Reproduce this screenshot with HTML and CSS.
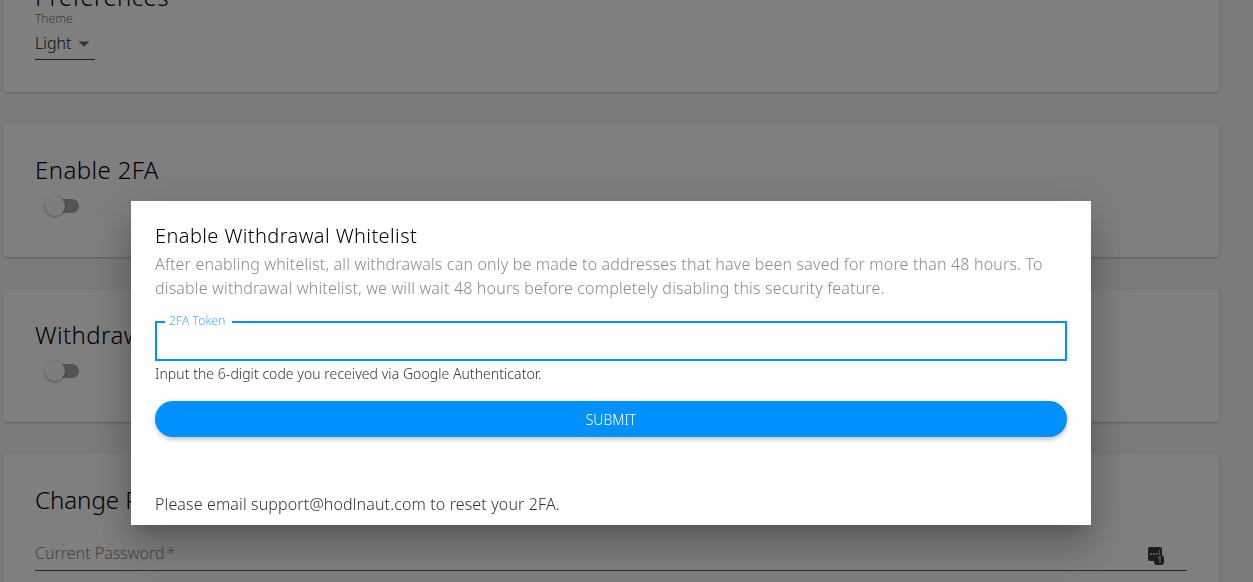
FILE: index.html
```html
<!DOCTYPE html>
<html lang="en">
<head>
<meta charset="utf-8">
<title>Settings</title>
<link rel="stylesheet" href="styles.css">
</head>
<body>
<main class="page">
  <section class="card card-prefs">
    <h2 class="card-title">Preferences</h2>
    <div class="select-label">Theme</div>
    <div class="select"><span>Light</span><svg class="caret" width="12" height="6" viewBox="0 0 12 6"><path d="M0.5 0.5h11L6 5.8z"/></svg></div>
  </section>
  <section class="card">
    <h2 class="card-title">Enable 2FA</h2>
    <div class="switch"><span class="track"></span><span class="thumb"></span></div>
  </section>
  <section class="card">
    <h2 class="card-title">Withdrawal Whitelist</h2>
    <div class="switch"><span class="track"></span><span class="thumb"></span></div>
  </section>
  <section class="card card-last">
    <h2 class="card-title card-title-tight">Change Password</h2>
    <div class="field">
      <span>Current Password<span class="req">*</span></span>
      <svg class="pm-icon" width="17" height="19" viewBox="0 0 17 19">
        <rect x="0" y="0" width="14" height="14" rx="2" fill="#3b3b3b"/>
        <rect x="2" y="6" width="2" height="2" fill="#aaa"/><rect x="5" y="6" width="2" height="2" fill="#aaa"/><rect x="8" y="6" width="2" height="2" fill="#aaa"/><rect x="11" y="3" width="1" height="5" fill="#aaa"/>
        <rect x="6" y="8" width="10" height="10" rx="3" fill="#3b3b3b"/>
        <path d="M10 11l2-1v6" fill="none" stroke="#aaa" stroke-width="1.6"/>
      </svg>
    </div>
  </section>
</main>
<div class="overlay">
  <div class="modal">
    <h3 class="modal-title">Enable Withdrawal Whitelist</h3>
    <p class="modal-desc">After enabling whitelist, all withdrawals can only be made to addresses that have been saved for more than 48 hours. To disable withdrawal whitelist, we will wait 48 hours before completely disabling this security feature.</p>
    <fieldset class="token">
      <legend>2FA Token</legend>
    </fieldset>
    <p class="helper">Input the 6-digit code you received via Google Authenticator.</p>
    <button class="submit" type="button">SUBMIT</button>
    <p class="reset">Please email support@hodlnaut.com to reset your 2FA.</p>
  </div>
</div>
</body>
</html>
```
FILE: styles.css
```css
* { box-sizing: border-box; }
html, body { margin: 0; height: 100%; overflow: hidden; }
body {
  background: #f6f6f6;
  font-family: "Noto Sans", "Open Sans", sans-serif;
  font-weight: 300;
  color: #000;
}
.page {
  width: 1216px;
  margin: -32px 0 0 3px;
  display: flex;
  flex-direction: column;
  gap: 32px;
}
.card {
  background: #fff;
  border-radius: 4px;
  height: 133px;
  flex: none;
  padding: 31px 32px 0;
  box-shadow: 0 1px 3px rgba(0,0,0,.16), 0 1px 1px rgba(0,0,0,.08);
}
.card-prefs { height: 124px; padding-top: 14px; }
.card-last { height: 128px; border-radius: 4px 4px 0 0; }
.card-title {
  margin: 0;
  font-size: 24px;
  line-height: 30px;
  font-weight: 300;
  letter-spacing: 0.4px;
  white-space: nowrap;
}
.card-title-tight { letter-spacing: 0; }
.select-label { font-size: 12px; line-height: 14px; color: #777; }
.select {
  width: 60px;
  height: 33px;
  margin-top: 1px;
  border-bottom: 1px solid #444;
  display: flex;
  align-items: center;
  gap: 6px;
  font-size: 16px;
  color: #222;
}
.caret { fill: #666; margin-top: 2px; }
.switch { position: relative; width: 38px; height: 24px; margin: 11px 0 0 8px; }
.track { position: absolute; left: 4px; top: 3px; width: 32px; height: 14px; border-radius: 7px; background: #a8a8a8; }
.thumb { position: absolute; left: 2px; top: 0; width: 20px; height: 20px; border-radius: 50%; background: #fafafa; box-shadow: 0 1px 3px rgba(0,0,0,.35); }
.field {
  position: relative;
  margin-top: 16px;
  padding-top: 4px;
  height: 40px;
  width: 1152px;
  border-bottom: 1px solid #555;
  display: flex;
  align-items: center;
  font-size: 16px;
  color: #888;
}
.req { margin-left: 2px; color: #999; }
.pm-icon { position: absolute; right: 22px; top: 16px; }
.overlay {
  position: fixed;
  inset: 0;
  background: rgba(0,0,0,.5);
}
.modal {
  position: absolute;
  left: 131px;
  top: 201px;
  width: 960px;
  height: 324px;
  padding: 24px;
  background: #fff;
  overflow: hidden;
  box-shadow: 0 11px 15px -7px rgba(0,0,0,.2), 0 24px 38px 3px rgba(0,0,0,.14), 0 9px 46px 8px rgba(0,0,0,.12);
}
.modal-title { margin: 0; font-size: 20px; line-height: 22px; font-weight: 300; letter-spacing: 0.4px; white-space: nowrap; }
.modal-desc { margin: 5px 0 0; font-size: 16px; line-height: 24px; letter-spacing: 0.17px; color: #8a8a8a; }
.token {
  margin: 14px 0 0;
  padding: 0 0 0 8px;
  height: 47px;
  border: 2px solid #0091ff;
  border-radius: 0;
}
.token legend { padding: 0 6px 2px 4px; font-size: 12px; line-height: 14px; letter-spacing: 0.13px; color: #42aeff; }
.helper { margin: 4px 0 0; font-size: 14px; line-height: 18px; letter-spacing: 0.05px; color: #333; }
.submit {
  display: block;
  width: 100%;
  height: 36px;
  margin-top: 18px;
  border: 0;
  border-radius: 18px;
  background: #0091ff;
  color: #fff;
  font: inherit;
  font-size: 14px;
  box-shadow: 0 3px 5px -1px rgba(0,0,0,.2), 0 1px 6px rgba(0,0,0,.12);
}
.reset { margin: 55px 0 0; font-size: 16px; line-height: 24px; letter-spacing: 0.13px; color: #333; }
```
